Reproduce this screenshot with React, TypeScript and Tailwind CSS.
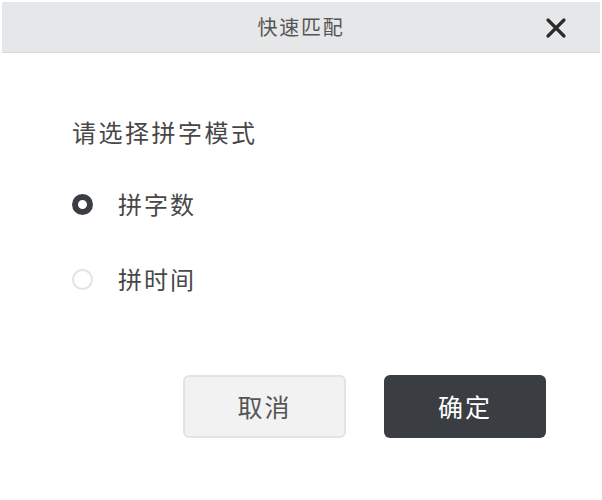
const font = { fontFamily: '"Noto Sans CJK SC", "Noto Sans", sans-serif' };

const Radio = ({ checked, label }: { checked: boolean; label: string }) => (
  <label className="flex items-center h-[28px] cursor-pointer">
    <span
      className={
        checked
          ? "w-[21px] h-[21px] rounded-full border-[6px] border-[#3a3e43] bg-white"
          : "w-[21px] h-[21px] rounded-full border-2 border-[#e2e3e5] bg-white"
      }
    />
    <span className="ml-[25px] text-[24px] tracking-[2px] text-[#474747] leading-[28px]">
      {label}
    </span>
  </label>
);

export default function App() {
  return (
    <div className="w-[602px] h-[500px] bg-white" style={font}>
      <div className="mt-[2px] mx-[2px] h-[51px] bg-[#e6e7e8] border-b border-[#d8d9da] flex items-center justify-center relative">
        <span className="text-[20px] tracking-[1.7px] text-[#555]">快速匹配</span>
        <button className="absolute right-[33px] top-[15px] w-[22px] h-[22px] flex items-center justify-center">
          <svg viewBox="0 0 22 22" width="22" height="22">
            <path d="M3 3 L19 19 M19 3 L3 19" stroke="#2b2b2b" strokeWidth="3.2" strokeLinecap="round" />
          </svg>
        </button>
      </div>

      <div className="pl-[72px] pt-[65px]">
        <div className="text-[24px] tracking-[2.5px] text-[#474747] leading-[28px]">请选择拼字模式</div>
        <div className="mt-[44px]">
          <Radio checked label="拼字数" />
        </div>
        <div className="mt-[47px]">
          <Radio checked={false} label="拼时间" />
        </div>
      </div>

      <div className="flex justify-end gap-[38px] pr-[56px] mt-[82px]">
        <button className="w-[163px] h-[63px] rounded-[6px] bg-[#f2f2f2] border-2 border-[#e3e3e3] text-[25px] tracking-[2px] text-[#555]">
          取消
        </button>
        <button className="w-[162px] h-[63px] rounded-[6px] bg-[#3a3e43] text-[25px] tracking-[2px] text-white">
          确定
        </button>
      </div>
    </div>
  );
}
